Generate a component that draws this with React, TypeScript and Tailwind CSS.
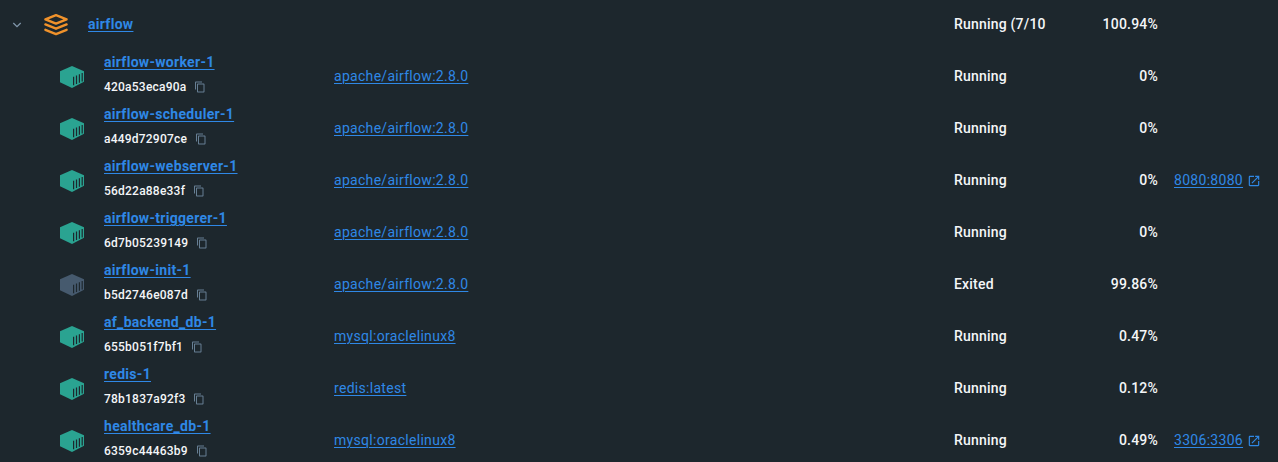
type Container = {
  name: string;
  id: string;
  image: string;
  status: string;
  cpu: string;
  port?: string;
};

const containers: Container[] = [
  { name: "airflow-worker-1", id: "420a53eca90a", image: "apache/airflow:2.8.0", status: "Running", cpu: "0%" },
  { name: "airflow-scheduler-1", id: "a449d72907ce", image: "apache/airflow:2.8.0", status: "Running", cpu: "0%" },
  { name: "airflow-webserver-1", id: "56d22a88e33f", image: "apache/airflow:2.8.0", status: "Running", cpu: "0%", port: "8080:8080" },
  { name: "airflow-triggerer-1", id: "6d7b05239149", image: "apache/airflow:2.8.0", status: "Running", cpu: "0%" },
  { name: "airflow-init-1", id: "b5d2746e087d", image: "apache/airflow:2.8.0", status: "Exited", cpu: "99.86%" },
  { name: "af_backend_db-1", id: "655b051f7bf1", image: "mysql:oraclelinux8", status: "Running", cpu: "0.47%" },
  { name: "redis-1", id: "78b1837a92f3", image: "redis:latest", status: "Running", cpu: "0.12%" },
  { name: "healthcare_db-1", id: "6359c44463b9", image: "mysql:oraclelinux8", status: "Running", cpu: "0.49%", port: "3306:3306" },
];

function StackIcon() {
  return (
    <svg width="26" height="24" viewBox="0 0 26 24" fill="none" stroke="#f0922b" strokeWidth="2.4" strokeLinejoin="round" strokeLinecap="round" className="mt-0.5">
      <path d="M13 2.200 L23.600 6.400 L13 10.600 L2.400 6.400 Z" />
      <path d="M2.400 11.400 L13 15.700 L23.600 11.400" />
      <path d="M2.400 16.800 L13 21.100 L23.600 16.800" />
    </svg>
  );
}

function ContainerIcon({ active }: { active: boolean }) {
  return (
    <svg width="24" height="22" viewBox="0 0 24 22" className={active ? "text-[#2aa391]" : "text-[#465a6e]"}>
      <path fill="currentColor" d="M12 0 L24 5.300 V15.800 L12 22 L0 16.200 V5.300 Z" />
      <path stroke="#1d272d" strokeWidth="1.2" d="M13.600 10.800 V19.200 M16.500 9.600 V18 M19.400 8.300 V16.700 M22.200 7.100 V15.400" />
    </svg>
  );
}

function CopyIcon() {
  return (
    <svg width="12" height="12" viewBox="0 0 24 24" fill="#677f94">
      <path d="M16 1H4c-1.100 0-2 .9-2 2v14h2V3h12V1zm3 4H8c-1.100 0-2 .9-2 2v14c0 1.100.9 2 2 2h11c1.100 0 2-.9 2-2V7c0-1.100-.9-2-2-2zm0 16H8V7h11v14z" />
    </svg>
  );
}

function OpenIcon() {
  return (
    <svg width="14" height="14" viewBox="0 0 24 24" fill="#2f88e6" className="mt-0.5">
      <path d="M19 19H5V5h7V3H5c-1.110 0-2 .9-2 2v14c0 1.100.89 2 2 2h14c1.100 0 2-.9 2-2v-7h-2v7zM14 3v2h3.590l-9.830 9.830 1.410 1.410L19 6.410V10h2V3h-7z" />
    </svg>
  );
}

const link = "text-[#2f88e6] underline decoration-1 underline-offset-2 tracking-[0.3px]";

export default function App() {
  return (
    <div className="h-[462px] w-[1278px] overflow-hidden bg-[#1d272d] font-['Roboto',sans-serif] text-sm text-[#f4f6f8]">
      <div className="flex h-[50px] pb-0.5">
        <div className="flex w-[88px] shrink-0 items-center pl-3">
          <svg width="10" height="10" viewBox="0 0 10 10" fill="none" stroke="#8096aa" strokeWidth="1.3" className="mt-0.5 mr-[21px]">
            <path d="M1.300 3 L5 6.700 L8.700 3" />
          </svg>
          <StackIcon />
        </div>
        <div className="flex w-[866px] shrink-0 items-center">
          <a className={`${link} font-bold`}>airflow</a>
        </div>
        <div className="flex w-[92px] shrink-0 items-center overflow-hidden font-medium tracking-[0.2px] whitespace-nowrap">Running (7/10</div>
        <div className="flex w-28 shrink-0 items-center justify-end font-medium tracking-[0.2px]">100.94%</div>
      </div>
      {containers.map((c) => (
        <div key={c.name} className="flex h-[52px]">
          <div className="flex w-[104px] shrink-0 items-center pl-[60px] pt-0.5">
            <ContainerIcon active={c.status === "Running"} />
          </div>
          <div className="flex w-[230px] shrink-0 flex-col">
            <div className="flex h-6 items-center">
              <a className={`${link} font-bold`}>{c.name}</a>
            </div>
            <div className="flex h-[26px] items-center gap-2 text-xs font-medium tracking-[0.22px]">
              {c.id}
              <CopyIcon />
            </div>
          </div>
          <div className="flex w-[620px] shrink-0 items-center">
            <a className={link}>{c.image}</a>
          </div>
          <div className="flex w-[92px] shrink-0 items-center font-medium tracking-[0.2px]">{c.status}</div>
          <div className="flex w-28 shrink-0 items-center justify-end font-medium tracking-[0.2px]">{c.cpu}</div>
          {c.port && (
            <div className="flex items-center gap-1 pl-4">
              <a className={link}>{c.port}</a>
              <OpenIcon />
            </div>
          )}
        </div>
      ))}
    </div>
  );
}
